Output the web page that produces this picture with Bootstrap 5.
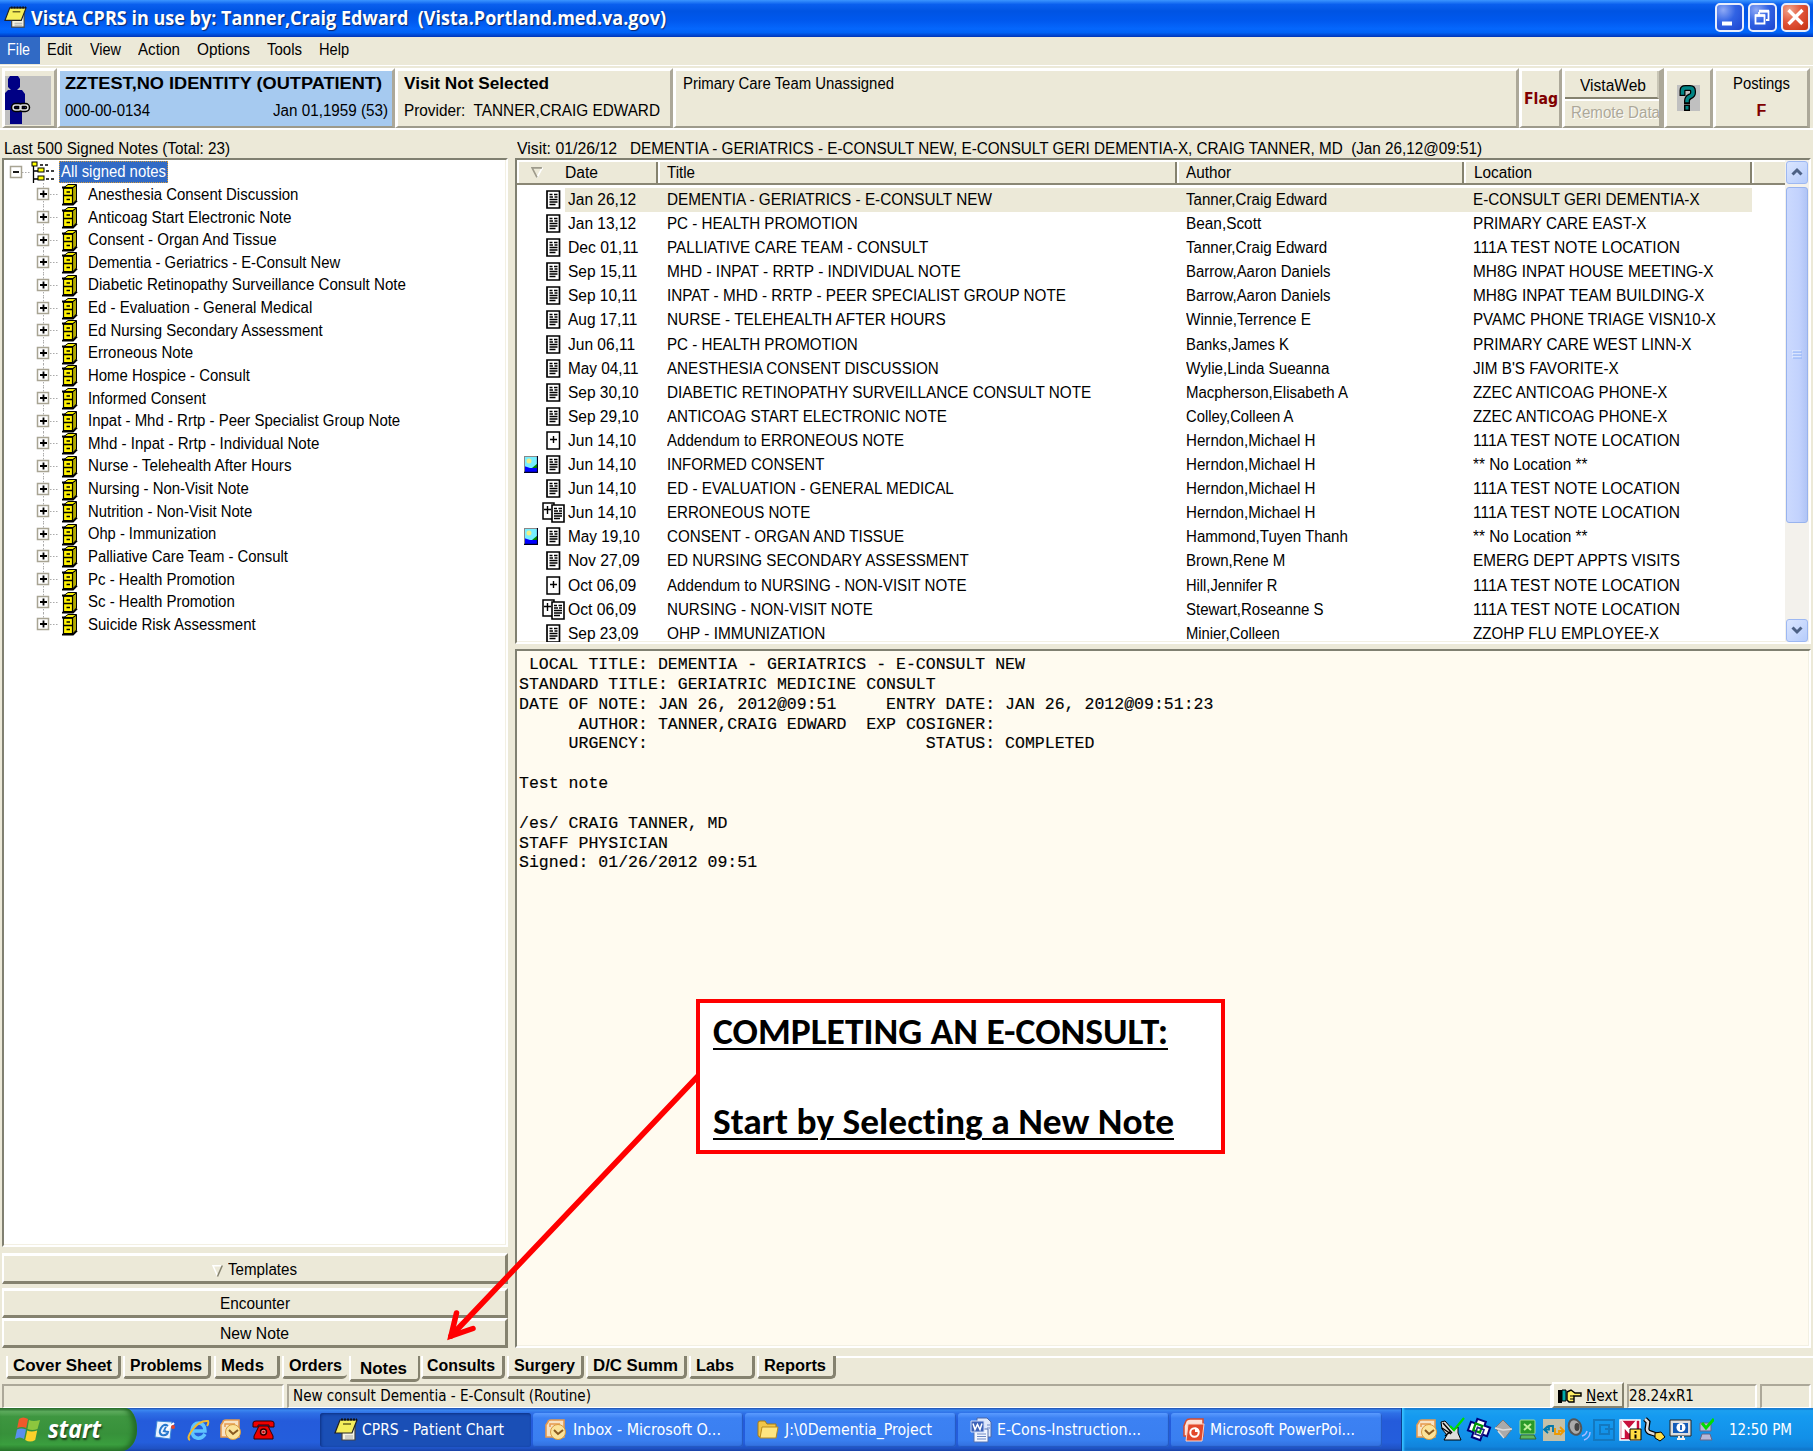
<!DOCTYPE html>
<html lang="en">
<head>
<meta charset="utf-8">
<title>VistA CPRS</title>
<link href="https://cdn.jsdelivr.net/npm/bootstrap@5.3.0/dist/css/bootstrap.min.css" rel="stylesheet">
<style>
html,body{height:1451px;width:1813px;overflow:hidden}
body{font-family:"Liberation Sans",Arial,sans-serif;font-size:16px;line-height:20px;color:#000;background:#ece9d8}
.fit{display:inline-block;transform-origin:0 50%;white-space:pre;flex:none}
svg{display:block;flex:none}
.titlebar{height:37px;background:linear-gradient(#3b95ff 0,#0a5fee 12%,#0054e3 30%,#0058ee 55%,#0567fd 78%,#0062f5 88%,#0040c8 97%,#0034b4);color:#fff;font:bold 20px/36px "Open Sans","Trebuchet MS",sans-serif;text-shadow:1px 1px 1px #0a246a;padding-left:4px;padding-right:3px}
.winbtn{width:29px;height:29px;border:2px solid #e8eefc;border-radius:5px;background:radial-gradient(circle at 25% 20%,#8ea9f5,#3163e4 45%,#1c45cf)}
.winbtn.shut{background:radial-gradient(circle at 25% 20%,#f0a58c,#e2553a 45%,#c4300f)}
.menubar{height:27px;line-height:26px}
.menubar>span{height:27px}
.hot{background:#316ac5;color:#fff}
.hdr{height:65px;border-top:1px solid #fff;padding:2px 2px 0 2px;margin-top:1px;border-bottom:2px solid #fff}
.panel3d{height:60px;border-top:3px solid #fff;border-left:3px solid #fff;border-right:3px solid #aca899;border-bottom:2px solid #9d9a8b}
.fsm{color:#800000;font-weight:bold}
.captions{height:28px;padding-top:9px}
.sunk{border:2px solid;border-color:#808071 #fff #fff #808071;box-shadow:inset -1px -1px 0 #f3f0e3;background:#fff}
.lefty{width:508px;padding-left:2px}
.treebox{height:1090px;margin-bottom:6px;padding-top:1px}
.trow{height:22.64px}
.sel{background:#316ac5;color:#fff;outline:1px dotted #d49a3a;outline-offset:-1px;height:22px;line-height:22px;padding:0 2px;width:109px}
.push{border-top:3px solid #fff;border-left:2px solid #fff;border-right:3px solid #85826f;border-bottom:3px solid #85826f;width:506px}
.righty{width:1296px;margin-left:7px}
.listbox{height:486px;overflow:hidden;margin-bottom:5px}
.lhead{height:25px;background:#ece9d8;border-top:2px solid #fff;border-bottom:2px solid #8a8775;line-height:21px}
.lhead>div{border-left:2px solid #fff;border-right:2px solid #85826f;height:21px}
.lrow{height:24.1px;line-height:24px}
.lrow.cur .cells{background:#ece9d8}
.cells{width:1187px;height:24px}
.c1{width:102px;padding-left:3px}.c2{width:519px}.c3{width:287px}
.iconcell{width:48px;height:24px}
.sbar{width:24px;background:#f3f1ec;padding:1px}
.sbtn{height:23px;border:1px solid #9db8f2;border-radius:3px;background:linear-gradient(135deg,#dbe6ff,#b6ccfb)}
.sthumb{height:336px;margin:3px 0 96px;border:1px solid #98b3ee;border-radius:3px;background:linear-gradient(90deg,#cbd9fe,#c2d2fd 60%,#b0c4f5)}
.notebox{flex:1;background:#fffbf0;font:16.54px/19.85px "Liberation Mono","Courier New",monospace;padding:4px 1px 4px 2px;margin:0;-webkit-text-stroke:.15px #000;overflow:hidden}
.tabs{height:36px;padding:8px 0 0 6px;font-weight:bold;font-size:16px}
.tb{height:23px;border-left:2px solid #fff;border-right:3px solid #85826f;border-bottom:3px solid #85826f;border-radius:0 0 5px 3px;padding-left:5px;line-height:20px;margin-right:2px}
.tb.on{height:26px;line-height:25px;padding-left:9px;border-right-width:2px}
.rest{flex:1;border-top:2px solid #fff;margin-left:0}
.status{height:24px;padding:0 2px;font-family:"DejaVu Sans Condensed",Tahoma,"Noto Sans",sans-serif;font-size:15px;line-height:21px}
.scell{border:1px solid;border-color:#aca899 #fff #fff #aca899;border-width:2px 2px 1px 2px;height:24px;padding-left:4px}
.taskbar{height:43px;background:linear-gradient(#1f4fae 0,#3b87f0 5%,#2e6fe6 12%,#245bdb 30%,#245edc 80%,#1f52c4 94%,#1941a5);color:#fff;font-family:"DejaVu Sans Condensed",Tahoma,"Noto Sans",sans-serif;font-size:15px}
.startbtn{width:137px;height:43px;background:linear-gradient(#2f7033 0,#5fae5f 8%,#3e9640 20%,#37913a 60%,#3a9e3e 85%,#2a7a2d);border-radius:0 12px 16px 0/0 21px 21px 0;font:italic bold 25px/38px "Open Sans","Liberation Sans",sans-serif;text-shadow:1px 2px 2px #1a3d1a;padding-left:14px;box-shadow:inset -4px 0 5px #236b26}
.task{height:34px;margin:5px 2px 0 0;border-radius:3px;background:linear-gradient(#5a9bff,#3c81f3 15%,#3a7ff0 80%,#316fdd);padding-left:12px;box-shadow:inset -1px -1px 1px #2458c0}
.task.down{background:#1a4fb6;box-shadow:inset 1px 1px 3px #0c2f80;padding-left:14px}
.tray{background:linear-gradient(#0c59b9 0,#1ba0f0 6%,#159af0 20%,#1290e8 70%,#1184dc 90%,#0d6cc0);border-left:1px solid #0a3f90;box-shadow:inset 2px 0 2px #36c0ff;padding-left:12px}
.callout-box{position:absolute;left:696px;top:999px;width:529px;height:155px;border:4px solid #ff0000;background:#fff;font:bold 36.5px/45px Carlito,Calibri,Lato,sans-serif;font-variant-ligatures:none;padding:6px 13px;z-index:3}
.callout-box u{text-decoration-thickness:2px;text-underline-offset:4px}
.arrow{position:absolute;left:440px;top:1065px;z-index:2}
</style>
<script src="https://cdn.jsdelivr.net/npm/bootstrap@5.3.0/dist/js/bootstrap.bundle.min.js"></script>
</head>
<body class="d-flex flex-column position-relative">
<svg width="0" height="0" class="position-absolute">
<symbol id="i-note" viewBox="0 0 24 24" preserveAspectRatio="none"><path d="M8 7h13v15H8z" fill="#f5f3e2" stroke="#444" stroke-width="1.200"/><path d="M11 18h8M11 20h8" stroke="#aaa"/><path d="M6 2h17l-5 13H1z" fill="#f5ee5c" stroke="#222" stroke-width="1.200"/><path d="M9 6h8" stroke="#6a6420" stroke-width="1.500"/><path d="M7 1.500h16" stroke="#111" stroke-width="2" stroke-dasharray="2 1"/></symbol>
<symbol id="i-cab" viewBox="0 0 17 23"><path d="M3 4.500L7 1.500H15.500L12 4.500z" fill="#f4ec00" stroke="#000" stroke-width="1"/><path d="M11.500 5L15.500 2V17L11.500 21z" fill="#b0a800" stroke="#000" stroke-width="1"/><path d="M2.500 5h9v15.500h-9z" fill="#fff200" stroke="#000" stroke-width="1.200"/><path d="M2.500 5h9M2.500 12.500h9" stroke="#000" stroke-width="1.400"/><path d="M5.500 9h3.500M5.500 16.500h3.500" stroke="#000" stroke-width="1.300"/><path d="M1 4.500h3M1 21.700h11l4-4" stroke="#000" stroke-width="1.800" fill="none"/></symbol>
<symbol id="i-doc" viewBox="0 0 15 19"><path d="M1 1h12.500v17H1z" fill="#fff" stroke="#000" stroke-width="1.700"/><path d="M3.500 4.500h3M8 4.500h3.500M3.500 7h3.500M8.500 7h3M3.500 9.500h8M3.500 12h8M3.500 14.500h6" stroke="#000" stroke-width="1.300"/></symbol>
<symbol id="i-add" viewBox="0 0 15 19"><path d="M1 1h12.500v17H1z" fill="#fff" stroke="#000" stroke-width="1.500"/><path d="M4 8.500h7M7.500 5v7" stroke="#000" stroke-width="1.400"/></symbol>
<symbol id="i-both" viewBox="0 0 23 21"><path d="M1 1h11v16H1z" fill="#fff" stroke="#000" stroke-width="1.500"/><path d="M2 7.500h7M5.500 4v8" stroke="#000" stroke-width="1.400"/><path d="M10 3h12v17H10z" fill="#fff" stroke="#000" stroke-width="1.600"/><path d="M12 6.500h3M16.500 6.500h3.500M12 9h4M17 9h3M12 11.500h8M12 14h8M12 16.500h6" stroke="#000" stroke-width="1.300"/></symbol>
<symbol id="i-pic" viewBox="0 0 14 17"><path d="M0 0h14v17H0z" fill="#7ef"/><circle cx="5" cy="5" r="2.500" fill="#ee8"/><path d="M14 7v5H8z" fill="#080"/><path d="M0 10l6 2h8v4H0z" fill="#00f"/><path d="M0 .5h14M.5 0v17" stroke="#888"/><path d="M0 16.300h14M13.500 0v17" stroke="#002" stroke-width="1.200"/></symbol>
<symbol id="i-outlook" viewBox="0 0 22 22"><path d="M3 3Q3 1 6 1h13v17H1V6z" fill="#f7e3c4" stroke="#e79a4e" stroke-width="1.600"/><path d="M5 8V5h10" fill="none" stroke="#e79a4e" stroke-width="1.500"/><circle cx="13" cy="13" r="7.500" fill="#fbe39a" stroke="#d99a3e"/><path d="M9 11l4 4 5-4" fill="none" stroke="#8a5a20" stroke-width="2"/></symbol>
<symbol id="i-folder" viewBox="0 0 22 20"><path d="M1 3q0-2 2-2h5l2 3h9v13H3q-2 0-2-2z" fill="#f0c548" stroke="#a67a14"/><path d="M5 7h16l-2 11H3z" fill="#ffe680" stroke="#b98b1c"/></symbol>
<symbol id="i-word" viewBox="0 0 22 26"><path d="M7 1h10l4 4v15H7z" fill="#dfe8fa" stroke="#4a67a8"/><path d="M4 12h14v13H4z" fill="#f2f6ff" stroke="#5573b0"/><path d="M7 17h9M7 19.500h9M7 22h9M17 8h3M17 11h3" stroke="#6c88c4"/><path d="M1 4h13v11H1z" fill="#3c62b8" stroke="#cddaf8"/><path d="M3 6.500l2 6 2.500-5 2.500 5 2-6" stroke="#fff" stroke-width="1.500" fill="none"/></symbol>
<symbol id="i-ppt" viewBox="0 0 22 24"><path d="M3 3q1-2 4-2h13v17H1V8z" fill="#fbe1d8" stroke="#d8492c" stroke-width="1.500"/><path d="M5 6h16l-2 17H3z" fill="#e2492c" stroke="#fbd3c6"/><circle cx="11.500" cy="14.500" r="4.200" fill="none" stroke="#fff" stroke-width="2"/><path d="M12 14V9.500A4.500 4.500 0 0 1 16.500 14z" fill="#fff"/></symbol>
<symbol id="i-tri" viewBox="0 0 11 10"><path d="M10.500 .5L5.500 9.500" stroke="#fff" stroke-width="1.500"/><path d="M10 .7H1L5.500 9.500" fill="none" stroke="#9d9a8b" stroke-width="1.500"/></symbol>
<symbol id="i-trid" viewBox="0 0 11 12"><path d="M10 .7H1L5.500 11" fill="none" stroke="#fff" stroke-width="1.500"/><path d="M10.300 .5L5.500 11.500" stroke="#85826f" stroke-width="1.500"/></symbol>
</svg>

<header class="titlebar d-flex">
 <svg width="23" height="23" style="margin-top:6px"><use href="#i-note"/></svg>
 <span class="fit" data-w="635" style="margin-left:4px">VistA CPRS in use by: Tanner,Craig Edward  (Vista.Portland.med.va.gov)</span>
 <div class="d-flex ms-auto gap-1 align-items-start" style="padding-top:3px">
  <div class="winbtn"><svg width="25" height="25"><path d="M5 18.500h10" stroke="#fff" stroke-width="4"/></svg></div>
  <div class="winbtn"><svg width="25" height="25" fill="none" stroke="#fff"><path d="M5.500 10.500h9v8h-9zM9 6.500h9.500v8.500H16M9 7v3" stroke-width="1.800"/><path d="M5 10.500h10M9 6h10" stroke-width="2.500"/></svg></div>
  <div class="winbtn shut"><svg width="25" height="25"><path d="M5.500 5l14 14M19.500 5l-14 14" stroke="#fff" stroke-width="3.400"/></svg></div>
 </div>
</header>

<nav class="menubar d-flex">
 <span class="hot" style="width:40px;padding-left:7px"><span class="fit" data-w="23">File</span></span>
 <span style="padding-left:7px"><span class="fit" data-w="25">Edit</span></span>
 <span style="padding-left:18px"><span class="fit" data-w="31">View</span></span>
 <span style="padding-left:17px"><span class="fit" data-w="42">Action</span></span>
 <span style="padding-left:17px"><span class="fit" data-w="53">Options</span></span>
 <span style="padding-left:17px"><span class="fit" data-w="35">Tools</span></span>
 <span style="padding-left:17px"><span class="fit" data-w="30">Help</span></span>
</nav>

<section class="hdr d-flex">
 <div class="panel3d" style="width:55px"><svg width="48" height="55"><path d="M0 5h46v49H0z" fill="#c0c0c0"/><path d="M5 5h8l2 3v8l-3 3h5l3 4v15h-3v15H5V39H0V22l3-3h3l-3-3V8z" fill="#000084"/><g fill="none" stroke="#000" stroke-width="4.500"><rect x="8" y="34" width="8" height="5" rx="2.500"/><rect x="15" y="34" width="8" height="5" rx="2.500"/></g><g fill="none" stroke="#ddd" stroke-width="1.500"><rect x="8" y="34" width="8" height="5" rx="2.500"/><rect x="15" y="34" width="8" height="5" rx="2.500"/></g></svg></div>
 <div class="panel3d" style="width:338px;background:#a6caf0;padding:3px 4px 0 5px">
  <div><b class="fit" data-w="317">ZZTEST,NO IDENTITY (OUTPATIENT)</b></div>
  <div class="d-flex justify-content-between" style="margin-top:7px"><span class="fit" data-w="85">000-00-0134</span><span class="fit" data-w="115">Jan 01,1959 (53)</span></div>
 </div>
 <div class="panel3d" style="width:278px;padding:3px 0 0 6px">
  <div><b class="fit" data-w="145">Visit Not Selected</b></div>
  <div style="margin-top:7px"><span class="fit" data-w="256">Provider:  TANNER,CRAIG EDWARD</span></div>
 </div>
 <div class="panel3d" style="width:846px;padding:3px 0 0 7px"><span class="fit" data-w="211">Primary Care Team Unassigned</span></div>
 <div class="panel3d d-flex align-items-center fsm" style="width:43px;padding-left:2px"><span class="fit" data-w="34" style="font-family:'DejaVu Sans Condensed'">Flag</span></div>
 <div class="panel3d" style="width:102px;border-right-width:5px">
  <div class="text-center" style="height:28px;line-height:30px;padding-left:3px;border-bottom:2px solid #85826f;border-right:2px solid #c9c6b6"><span class="fit" data-w="66">VistaWeb</span></div>
  <div style="height:27px;line-height:24px;border-top:2px solid #fff;color:#aca899;text-shadow:1px 1px #fff;padding-left:6px;overflow:hidden"><span class="fit" data-w="89">Remote Data</span></div>
 </div>
 <div class="panel3d" style="width:49px"><svg width="43" height="55"><path d="M10 14h23v26H10z" fill="#c0c0c0"/><g fill="none" stroke-linecap="square"><path d="M15.500 22v-2.500q0-2.500 3-2.500h4.500q3 0 3 3v2q0 2-3 3.500t-3 4.500" stroke="#000" stroke-width="6"/><path d="M20 36.500v.5" stroke="#000" stroke-width="6"/><path d="M15.500 22v-2.500q0-2.500 3-2.500h4.500q3 0 3 3v2q0 2-3 3.500t-3 4" stroke="#008484" stroke-width="3.500"/><path d="M20 36.500v.5" stroke="#008484" stroke-width="3"/></g></svg></div>
 <div class="panel3d text-center" style="width:97px;padding-top:3px"><div><span class="fit" data-w="57">Postings</span></div><div class="fsm" style="margin-top:7px">F</div></div>
</section>

<div class="captions d-flex">
 <span class="fit" data-w="226" style="margin-left:4px">Last 500 Signed Notes (Total: 23)</span>
 <span style="width:287px"></span>
 <span class="fit" data-w="100">Visit: 01/26/12</span>
 <span style="width:13px"></span>
 <span class="fit" data-w="852">DEMENTIA - GERIATRICS - E-CONSULT NEW, E-CONSULT GERI DEMENTIA-X, CRAIG TANNER, MD  (Jan 26,12@09:51)</span>
</div>

<main class="d-flex" style="height:1190px">
 <div class="lefty d-flex flex-column">
  <div class="treebox sunk" id="tree">
   <div class="trow d-flex align-items-center">
    <svg width="55" height="23"><path d="M18 11.500h9" stroke="#aaa" stroke-dasharray="1.500 1.500"/><rect x="6.500" y="5.500" width="11" height="11" fill="#fff" stroke="#a8a493" stroke-width="1.500"/><path d="M9 11h6" stroke="#000" stroke-width="1.800"/><path d="M29.500 3v19M30 10h4M30 18h4" stroke="#000" stroke-width="1.300" fill="none"/><path d="M36 4h9M42 10h8M42 18h8" stroke="#000" stroke-width="1.500" stroke-dasharray="3 2"/><g fill="#ff0" stroke="#000"><rect x="28" y="1" width="5" height="4"/><rect x="34" y="7" width="6" height="4"/><rect x="34" y="15" width="6" height="4"/></g></svg>
    <div class="sel"><span class="fit" data-w="105">All signed notes</span></div>
   </div>
  </div>
  <div class="push text-center" style="height:31px;line-height:28px;margin-bottom:4px"><svg class="d-inline-block" width="11" height="12"><use href="#i-trid"/></svg> <span class="fit" data-w="69">Templates</span></div>
  <div class="push text-center" style="height:30px;line-height:26px"><span class="fit" data-w="70">Encounter</span></div>
  <div class="push text-center" style="height:30px;line-height:25px"><span class="fit" data-w="69">New Note</span></div>
 </div>
 <div class="righty d-flex flex-column">
  <div class="listbox sunk d-flex">
   <div style="width:1268px">
    <div class="lhead d-flex">
     <div class="d-flex align-items-center" style="width:141px;padding-left:12px"><svg width="12" height="11"><use href="#i-tri"/></svg><span class="fit" data-w="33" style="margin-left:22px">Date</span></div>
     <div style="width:519px;padding-left:7px"><span class="fit" data-w="28">Title</span></div>
     <div style="width:287px;padding-left:7px"><span class="fit" data-w="45">Author</span></div>
     <div style="width:288px;padding-left:8px"><span class="fit" data-w="58">Location</span></div>
     <div class="flex-fill border-end-0"></div>
    </div>
    <div id="rows" style="padding-top:3px"></div>
   </div>
   <div class="sbar">
    <div class="sbtn"><svg width="20" height="20"><path d="M5.500 12.500L10 8l4.500 4.500" fill="none" stroke="#4d6185" stroke-width="3"/></svg></div>
    <div class="sthumb d-flex align-items-center justify-content-center"><svg width="10" height="10"><path d="M0 1h9M0 4h9M0 7h9" stroke="#eef4fe"/><path d="M1 2h9M1 5h9M1 8h9" stroke="#8cb0f8"/></svg></div>
    <div class="sbtn"><svg width="20" height="20"><path d="M5.500 7.500L10 12l4.500-4.500" fill="none" stroke="#4d6185" stroke-width="3"/></svg></div>
   </div>
  </div>
<pre class="notebox sunk"> LOCAL TITLE: DEMENTIA - GERIATRICS - E-CONSULT NEW
STANDARD TITLE: GERIATRIC MEDICINE CONSULT
DATE OF NOTE: JAN 26, 2012@09:51     ENTRY DATE: JAN 26, 2012@09:51:23
      AUTHOR: TANNER,CRAIG EDWARD  EXP COSIGNER:
     URGENCY:                            STATUS: COMPLETED

Test note

/es/ CRAIG TANNER, MD
STAFF PHYSICIAN
Signed: 01/26/2012 09:51</pre>
 </div>
</main>

<div class="tabs d-flex">
 <div class="tb" style="width:115px"><span class="fit" data-w="99">Cover Sheet</span></div>
 <div class="tb" style="width:88px;margin-right:3px"><span class="fit" data-w="72">Problems</span></div>
 <div class="tb" style="width:66px"><span class="fit" data-w="43">Meds</span></div>
 <div class="tb" style="width:65px;border-right:0"><span class="fit" data-w="53">Orders</span></div>
 <div class="tb on" style="width:71px;margin-right:1px"><span class="fit" data-w="47">Notes</span></div>
 <div class="tb" style="width:84px;padding-left:4px"><span class="fit" data-w="68">Consults</span></div>
 <div class="tb" style="width:77px"><span class="fit" data-w="61">Surgery</span></div>
 <div class="tb" style="width:101px"><span class="fit" data-w="85">D/C Summ</span></div>
 <div class="tb" style="width:66px"><span class="fit" data-w="38">Labs</span></div>
 <div class="tb me-0" style="width:79px"><span class="fit" data-w="62">Reports</span></div>
 <div class="rest"></div>
</div>

<footer class="status d-flex">
 <div class="scell" style="width:282px;margin-right:3px"></div>
 <div class="scell" style="width:1265px"><span class="fit" data-w="298">New consult Dementia - E-Consult (Routine)</span></div>
 <div class="d-flex" style="width:72px;height:26px;margin:-2px 3px 0 0;border:2px solid;border-color:#fff #85826f #85826f #fff;padding-left:4px;line-height:24px">
  <svg width="24" height="22"><path d="M0 6h4v13H0z" fill="#000"/><path d="M4 6h4v11H4z" fill="#0aa" stroke="#000"/><path d="M9 8l4-2 4 3h6v3h-7v6H11l-2-2z" fill="#fe6" stroke="#000" stroke-width="1.400"/><path d="M12 12h4M12 15h4" stroke="#000"/></svg>
  <span class="fit ms-1" data-w="32"><u>N</u>ext</span></div>
 <div class="scell" style="width:130px;margin-right:3px;padding-left:0"><span class="fit" data-w="65">28.24xR1</span></div>
 <div class="scell flex-fill"></div>
</footer>

<div class="taskbar d-flex">
 <div class="startbtn d-flex align-items-center"><svg width="28" height="28"><path d="M5 3q4-3 9 0l-1.800 9q-4.500-2-9 0z" fill="#f0592a"/><path d="M15 4q4 2 11 0l-2.500 9q-5 2-10 0z" fill="#8cc63e"/><path d="M3 13.500q4-2 9 0l-2 9.500q-4-3-9 0z" fill="#5b8fee"/><path d="M13.200 14.500q4 2 10 0l-2 9.500q-5 3-10 0z" fill="#fcd12a"/></svg><span class="fit" data-w="53" style="margin:-3px 0 0 6px">start</span></div>
 <div class="d-flex align-items-center" style="width:183px;gap:10px;padding-left:17px">
  <svg width="22" height="22"><path d="M3 2l15 1-2 17L1 18z" fill="#eaf4ff" stroke="#3b86d8"/><path d="M14 7q-4-3-7 2t1 7q5 1 6-3l-4-1 2-4" fill="none" stroke="#2878cc" stroke-width="2"/><path d="M12 11L20 4" stroke="#fff" stroke-width="2"/><circle cx="19" cy="8" r="2" fill="#e2442a"/></svg>
  <svg width="24" height="24"><path d="M19 16q-3 5-8 4-5-1-5-8 1-7 7-7 6 1 6 8H7" fill="none" stroke="#5fc4ff" stroke-width="3.500"/><path d="M4 22q-4-2 3-11T22 3q1 2-1 5" fill="none" stroke="#f1b92f" stroke-width="2"/></svg>
  <svg width="22" height="22"><use href="#i-outlook"/></svg>
  <svg width="23" height="20"><path d="M1 3q0-2 3-2h15q3 0 3 2v4h-5V5H6v2H1z" fill="#e00" stroke="#300"/><path d="M7 6h9l5 10v3H2v-3z" fill="#e00" stroke="#300"/><circle cx="11.500" cy="12" r="3" fill="#e88" stroke="#300" stroke-width="1.500"/><circle cx="11.500" cy="12" r="1.200" fill="#c00"/></svg>
 </div>
 <div class="task down d-flex align-items-center" style="width:211px"><svg width="24" height="24"><use href="#i-note"/></svg><span class="fit" data-w="142" style="margin-left:4px">CPRS - Patient Chart</span></div>
 <div class="task d-flex align-items-center" style="width:210px"><svg width="22" height="22"><use href="#i-outlook"/></svg><span class="fit" data-w="148" style="margin-left:6px">Inbox - Microsoft O...</span></div>
 <div class="task d-flex align-items-center" style="width:211px"><svg width="22" height="20"><use href="#i-folder"/></svg><span class="fit" data-w="147" style="margin-left:6px">J:\0Dementia_Project</span></div>
 <div class="task d-flex align-items-center" style="width:211px"><svg width="22" height="26"><use href="#i-word"/></svg><span class="fit" data-w="144" style="margin-left:5px">E-Cons-Instruction...</span></div>
 <div class="task d-flex align-items-center" style="width:211px"><svg width="22" height="24"><use href="#i-ppt"/></svg><span class="fit" data-w="145" style="margin-left:5px">Microsoft PowerPoi...</span></div>
 <div style="width:17px"></div>
 <div class="tray d-flex align-items-center flex-fill">
  <svg width="300" height="26">
   <use href="#i-outlook" x="2" y="2" width="22" height="22"/>
   <path d="M27 5l4-1 8 9 5-3v6l3 7H30l3-5-5-6z" fill="#ddd" stroke="#000"/><path d="M29 6l9 10M28 11l9 6M31 19l6-5" stroke="#000" stroke-width="1.500"/><path d="M36 9l4 4L50 1" fill="none" stroke="#0d0" stroke-width="2.200"/>
   <g transform="rotate(20 65 12)"><path d="M60 3h9v4h6v9h-5v6h-9v-5h-6V8h5z" fill="#fff" stroke="#00007a" stroke-width="2"/><path d="M60 8h7v7h-7z" fill="none" stroke="#090" stroke-width="2.200"/><path d="M63 11h7v7h-7z" fill="none" stroke="#228" stroke-width="1.600"/></g>
   <path d="M81 11l8-8 9 9-7 9z" fill="#aaa" stroke="#777"/><path d="M81 11l8 2 9-1M84 14l6 7" stroke="#ddd" fill="none" stroke-width="1.500"/>
   <rect x="106" y="3" width="15" height="14" rx="1" fill="#2a9a28" stroke="#9fdc90"/><path d="M110 7l7 6M117 7l-7 6" stroke="#bff09a" stroke-width="2"/><path d="M107 18h13l2 4h-16z" fill="#5cb85c" stroke="#363"/>
   <path d="M129 2h22v22h-22z" fill="#c4c0a8"/><path d="M134 9l-4 3.500 4 3.500M130 12.500h5V9h4v6" fill="none" stroke="#07a" stroke-width="1.800"/><path d="M146 10l4 4-4 4M150 14h-5v3h-4v-6" fill="none" stroke="#e90" stroke-width="1.800"/>
   <ellipse cx="161" cy="10" rx="6" ry="8" fill="#aaa" stroke="#555" stroke-width="2" transform="rotate(-20 161 10)"/><ellipse cx="163" cy="10" rx="2.500" ry="4" fill="#444"/><path d="M168 19q4-1 5-5M170 23q6-2 6-8" fill="none" stroke="#a6b8ff" stroke-width="1.500"/>
   <path d="M180 3h20v20h-20zM186 8h9v9h-9zM191 12h9" fill="none" stroke="#1378c0" stroke-width="2"/>
   <path d="M206 3h20v20h-20z" fill="#c8103c" stroke="#fff" stroke-width="1.500"/><path d="M209 21V7l6 7 6-7v5" fill="none" stroke="#fff" stroke-width="3.500"/><path d="M216 12h11v11h-11z" fill="#fd4" stroke="#000"/><path d="M221.500 14v2M221.500 17.500v4" stroke="#000" stroke-width="2"/>
   <path d="M231 2l3 3-1 7q0 3 4 4l6 2" fill="none" stroke="#000" stroke-width="5"/><path d="M231 2l3 3-1 7q0 3 4 4l6 2" fill="none" stroke="#ddd" stroke-width="2.500"/><path d="M241 16l6-1 4 5-5 4-5-3z" fill="#fd4" stroke="#000"/>
   <path d="M256 3h21v16h-21z" fill="#ddd" stroke="#222"/><path d="M259 6h15v10h-15z" fill="#135bb8"/><path d="M263 22h8M265 19v3h4v-3" stroke="#eee" stroke-width="2" fill="none"/><circle cx="267" cy="10.500" r="4.500" fill="#fff"/><path d="M267 8v5" stroke="#135bb8" stroke-width="1.800"/>
   <path d="M286 6h11v8h-11zM288 17h8l2 6h-12z" fill="#b8b8d8" stroke="#668"/><path d="M288 6l4 5 8-9" fill="none" stroke="#0d0" stroke-width="3"/>
  </svg>
  <span class="fit" data-w="63" style="margin-left:15px">12:50 PM</span>
 </div>
</div>

<svg class="arrow" width="270" height="280" fill="none" stroke="#f00" stroke-width="5.500" stroke-linecap="round"><path d="M258 11L11 271"/><path d="M16.500 248L11 271L33 263.500"/></svg>
<div class="callout-box">
 <div><u class="fit" data-w="455">COMPLETING AN E-CONSULT:</u></div>
 <div>&nbsp;</div>
 <div><u class="fit" data-w="461">Start by Selecting a New Note</u></div>
</div>

<script>
const K = 1.15625; // list widths are stored in smaller units than pixels
const tree = [["Anesthesia Consent Discussion",182],["Anticoag Start Electronic Note",176],["Consent - Organ And Tissue",163],["Dementia - Geriatrics - E-Consult New",218],["Diabetic Retinopathy Surveillance Consult Note",275],["Ed - Evaluation - General Medical",194],["Ed Nursing Secondary Assessment",203],["Erroneous Note",91],["Home Hospice - Consult",140],["Informed Consent",102],["Inpat - Mhd - Rrtp - Peer Specialist Group Note",270],["Mhd - Inpat - Rrtp - Individual Note",200],["Nurse - Telehealth After Hours",176],["Nursing - Non-Visit Note",139],["Nutrition - Non-Visit Note",142],["Ohp - Immunization",111],["Palliative Care Team - Consult",173],["Pc - Health Promotion",127],["Sc - Health Promotion",127],["Suicide Risk Assessment",145]];
const L = "111A TEST NOTE LOCATION", H = "Herndon,Michael H";
const rows = [
["doc","Jan 26,12",59,"DEMENTIA - GERIATRICS - E-CONSULT NEW",281,"Tanner,Craig Edward",122,"E-CONSULT GERI DEMENTIA-X",196],
["doc","Jan 13,12",59,"PC - HEALTH PROMOTION",165,"Bean,Scott",65,"PRIMARY CARE EAST-X",150],
["doc","Dec 01,11",61,"PALLIATIVE CARE TEAM - CONSULT",226,"Tanner,Craig Edward",122,L,179],
["doc","Sep 15,11",60,"MHD - INPAT - RRTP - INDIVIDUAL NOTE",254,"Barrow,Aaron Daniels",125,"MH8G INPAT HOUSE MEETING-X",208],
["doc","Sep 10,11",60,"INPAT - MHD - RRTP - PEER SPECIALIST GROUP NOTE",345,"Barrow,Aaron Daniels",125,"MH8G INPAT TEAM BUILDING-X",200],
["doc","Aug 17,11",60,"NURSE - TELEHEALTH AFTER HOURS",241,"Winnie,Terrence E",108,"PVAMC PHONE TRIAGE VISN10-X",210],
["doc","Jun 06,11",58,"PC - HEALTH PROMOTION",165,"Banks,James K",89,"PRIMARY CARE WEST LINN-X",189],
["doc","May 04,11",61,"ANESTHESIA CONSENT DISCUSSION",235,"Wylie,Linda Sueanna",124,"JIM B'S FAVORITE-X",126],
["doc","Sep 30,10",61,"DIABETIC RETINOPATHY SURVEILLANCE CONSULT NOTE",367,"Macpherson,Elisabeth A",140,"ZZEC ANTICOAG PHONE-X",168],
["doc","Sep 29,10",61,"ANTICOAG START ELECTRONIC NOTE",242,"Colley,Colleen A",93,"ZZEC ANTICOAG PHONE-X",168],
["add","Jun 14,10",59,"Addendum to ERRONEOUS NOTE",205,H,112,L,179],
["doc","Jun 14,10",59,"INFORMED CONSENT",136,H,112,"** No Location **",99,1],
["doc","Jun 14,10",59,"ED - EVALUATION - GENERAL MEDICAL",248,H,112,L,179],
["both","Jun 14,10",59,"ERRONEOUS NOTE",124,H,112,L,179],
["doc","May 19,10",62,"CONSENT - ORGAN AND TISSUE",205,"Hammond,Tuyen Thanh",140,"** No Location **",99,1],
["doc","Nov 27,09",62,"ED NURSING SECONDARY ASSESSMENT",261,"Brown,Rene M",86,"EMERG DEPT APPTS VISITS",179],
["add","Oct 06,09",59,"Addendum to NURSING - NON-VISIT NOTE",259,"Hill,Jennifer R",79,L,179],
["both","Oct 06,09",59,"NURSING - NON-VISIT NOTE",178,"Stewart,Roseanne S",119,L,179],
["doc","Sep 23,09",61,"OHP - IMMUNIZATION",137,"Minier,Colleen",81,"ZZOHP FLU EMPLOYEE-X",161]];
const fit = (t,w) => `<span class="fit" data-w="${(w*K).toFixed(1)}">${t}</span>`;
document.getElementById("tree").insertAdjacentHTML("beforeend", tree.map(([t,w],i) => `<div class="trow d-flex align-items-center"><svg width="57" height="23"><path d="M39.500 0v${i<19?23:11}M46 11.500h9" stroke="#aaa" stroke-dasharray="1.500 1.500"/><rect x="33.500" y="5.500" width="11" height="11" fill="#fff" stroke="#a8a493" stroke-width="1.500"/><path d="M36 11h7M39.500 7.500v7" stroke="#000" stroke-width="1.800"/></svg><svg width="17" height="23"><use href="#i-cab"/></svg><span style="width:10px"></span>${fit(t,w)}</div>`).join(""));
document.getElementById("rows").innerHTML = rows.map((r,i) => `<div class="lrow d-flex${i?"":" cur"}"><svg class="iconcell" width="48" height="24">${r[9]?'<use href="#i-pic" x="7" y="3" width="14" height="17"/>':""}<use href="#i-${r[0]}" ${r[0]=="both"?'x="25" y="1" width="23" height="21"':'x="29" y="2" width="15" height="19"'}/></svg><div class="cells d-flex"><div class="c1">${fit(r[1],r[2])}</div><div class="c2">${fit(r[3],r[4])}</div><div class="c3">${fit(r[5],r[6])}</div><div>${fit(r[7],r[8])}</div></div></div>`).join("");
document.querySelectorAll(".fit").forEach(e => {
  const n = e.getBoundingClientRect().width, w = +e.dataset.w;
  e.style.transform = `scaleX(${w/n})`;
  e.style.marginRight = `${w-n}px`;
});
</script>
</body>
</html>
